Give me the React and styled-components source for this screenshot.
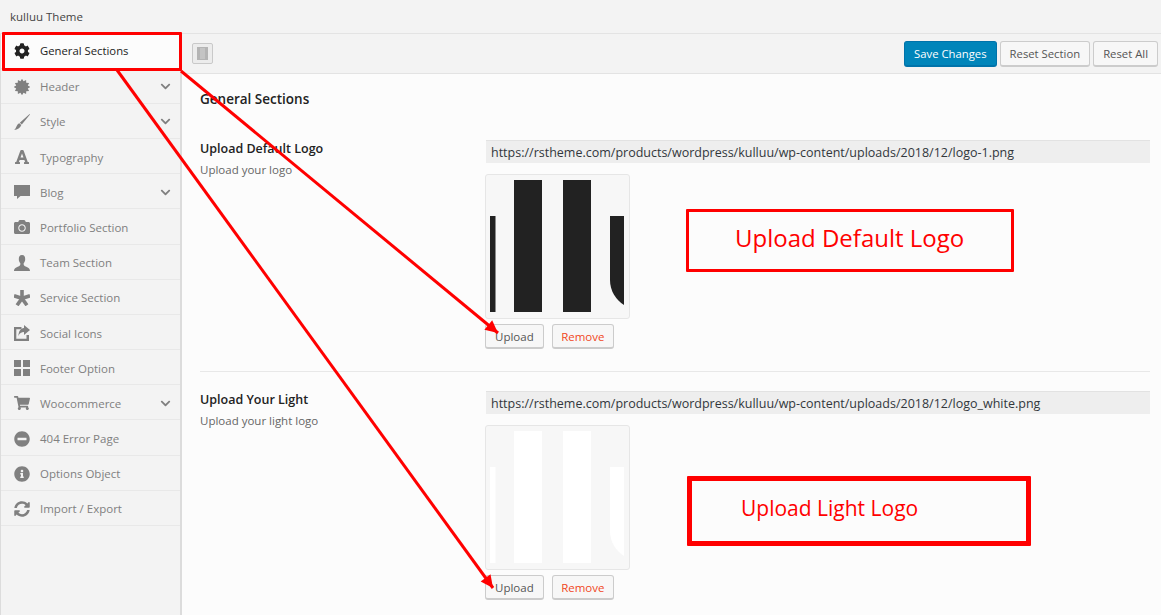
import React from "react";
import styled, { createGlobalStyle } from "styled-components";
import {
  FaCog,
  FaFont,
  FaCamera,
  FaShoppingCart,
  FaMinusCircle,
  FaInfoCircle,
  FaSyncAlt,
  FaChevronDown,
} from "react-icons/fa";

const GlobalStyle = createGlobalStyle`
  html, body {
    margin: 0;
    padding: 0;
    background: #fcfcfc;
  }
  * {
    box-sizing: border-box;
  }
`;

const Page = styled.div`
  position: relative;
  width: 1161px;
  height: 615px;
  overflow: hidden;
  font-family: "Open Sans", "Noto Sans", sans-serif;
  font-size: 12px;
  color: #555;
`;

const TopBar = styled.div`
  height: 34px;
  padding: 0 10px;
  display: flex;
  align-items: center;
  background: #f3f3f3;
  border-bottom: 1px solid #e3e3e3;
  color: #444;
  font-size: 11.5px;
`;

const Body = styled.div`
  display: flex;
  height: 581px;
`;

const Sidebar = styled.nav`
  width: 182px;
  flex: none;
  background: #f3f3f3;
  border-left: 1px solid #dcdcdc;
  border-right: 2px solid #dcdcdc;
`;

const MenuItem = styled.div`
  height: ${({ $active }) => ($active ? "34.6px" : "35.2px")};
  padding: ${({ $active }) => ($active ? "0" : "2px")} 0 0 13px;
  display: flex;
  align-items: center;
  background: ${({ $active }) => ($active ? "#fcfcfc" : "transparent")};
  border-bottom: 1px solid #e8e8e8;
  color: ${({ $active }) => ($active ? "#222" : "#808080")};
  font-size: ${({ $active }) => ($active ? "11.3px" : "11.5px")};
`;

const MenuIcon = styled.span`
  width: 16px;
  height: 16px;
  margin-right: 10px;
  display: flex;
  align-items: center;
  justify-content: center;
  flex: none;
  font-size: 16px;
  color: ${({ $active }) => ($active ? "#222" : "#808080")};
`;

const MenuLabel = styled.span`
  flex: 1;
  white-space: nowrap;
`;

const Chevron = styled(FaChevronDown)`
  margin-right: 9px;
  font-size: 11px;
  color: #808080;
`;

const Main = styled.main`
  flex: 1;
  min-width: 0;
`;

const ActionBar = styled.div`
  height: 40px;
  padding: 7px 3px 0 10px;
  display: flex;
  align-items: flex-start;
  background: #f3f3f3;
  border-bottom: 1px solid #e3e3e3;
`;

const ExpandToggle = styled.div`
  width: 21px;
  height: 21px;
  margin: 2px auto 0 0;
  padding: 3px 4px;
  background: #ececec;
  border: 1px solid #c9c9c9;
  border-radius: 2px;
`;

const ToggleFill = styled.div`
  width: 100%;
  height: 100%;
  background: #c4c4c4;
  border: 1px solid #b4b4b4;
  border-left-width: 3px;
  border-right-width: 3px;
`;

const HeadButton = styled.div`
  height: 26px;
  margin-left: 3px;
  padding: 0 9px;
  display: flex;
  align-items: center;
  background: ${({ $primary }) => ($primary ? "#0085ba" : "#f7f7f7")};
  border: 1px solid ${({ $primary }) => ($primary ? "#0073aa" : "#ccc")};
  border-bottom-width: 2px;
  border-radius: 3px;
  color: ${({ $primary }) => ($primary ? "#fff" : "#555")};
  font-size: 11.3px;
`;

const Content = styled.div`
  padding: 15px 11px 0 18px;
`;

const Title = styled.h2`
  margin: 0 0 31px;
  font-size: 13.5px;
  line-height: 20px;
  font-weight: 600;
  color: #222;
`;

const Row = styled.section`
  display: grid;
  grid-template-columns: 285px 1fr;
  padding-bottom: ${({ $last }) => ($last ? "0" : "22px")};
  margin-bottom: ${({ $last }) => ($last ? "0" : "19px")};
  border-bottom: ${({ $last }) => ($last ? "none" : "1px solid #e8e8e8")};
`;

const FieldName = styled.div`
  font-size: 12.5px;
  line-height: 18px;
  font-weight: 600;
  color: #222;
`;

const FieldHint = styled.div`
  margin-top: 4px;
  font-size: 11.5px;
  line-height: 16px;
  color: #666;
`;

const UrlInput = styled.div`
  width: 664px;
  height: 23px;
  margin: 0 0 11px 1px;
  padding: 0 5px;
  display: flex;
  align-items: center;
  background: #eee;
  border-top: 1px solid #e2e2e2;
  color: #32373c;
  font-size: 12.5px;
  white-space: nowrap;
`;

const Preview = styled.div`
  width: 145px;
  height: 145px;
  background: #f7f7f7;
  border: 1px solid #e6e6e6;
  border-radius: 3px;
`;

const LogoArt = styled.svg`
  display: block;
  margin: -1px;
`;

const Buttons = styled.div`
  margin-top: 5px;
  display: flex;
  gap: 8px;
`;

const SmallButton = styled.div`
  height: 25px;
  padding: 0 ${({ $danger }) => ($danger ? "8.5px" : "9px")};
  display: flex;
  align-items: center;
  background: #f7f7f7;
  border: 1px solid #ccc;
  border-bottom-width: 2px;
  border-radius: 3px;
  color: ${({ $danger }) => ($danger ? "#f1471d" : "#555")};
  font-size: 11.5px;
`;

const Note = styled.div`
  position: absolute;
  left: ${({ $left }) => $left}px;
  top: ${({ $top }) => $top}px;
  width: ${({ $width }) => $width}px;
  height: ${({ $height }) => $height}px;
  padding: 0 0 ${({ $lift }) => $lift}px ${({ $pad }) => $pad}px;
  display: flex;
  align-items: center;
  background: transparent;
  border: ${({ $thick }) => $thick}px solid #f00;
  border-radius: 1px;
  color: #f00;
  font-size: ${({ $size }) => $size}px;
  white-space: nowrap;
`;

const ActiveFrame = styled.div`
  position: absolute;
  left: 2px;
  top: 32px;
  width: 180px;
  height: 39px;
  border: 3px solid #f00;
  border-radius: 1px;
`;

const ArrowLayer = styled.svg`
  position: absolute;
  left: 0;
  top: 0;
  pointer-events: none;
`;

// icons the packages only have in a rounder cut
const Glyph = ({ children }) => (
  <svg width="16" height="16" viewBox="0 0 16 16" fill="currentColor">
    {children}
  </svg>
);

const burstPoints = Array.from({ length: 24 }, (_, i) => {
  const r = i % 2 ? 6 : 8.2;
  const a = (i * Math.PI) / 12;
  return `${8 + r * Math.sin(a)},${8 - r * Math.cos(a)}`;
}).join(" ");

const BurstIcon = () => (
  <Glyph>
    <polygon points={burstPoints} />
  </Glyph>
);

const BrushIcon = () => (
  <Glyph>
    <path d="M15.6 0l.4.4-8.2 10-2-1.7zM5.3 9.2l2 1.8c-1 2.8-3.8 4.6-7.1 5 2.2-1.8 2.2-5.5 5.1-6.8z" />
  </Glyph>
);

const BubbleIcon = () => (
  <Glyph>
    <path d="M0 1h16v11H6.5L3 15v-3H0z" />
  </Glyph>
);

const BustIcon = () => (
  <Glyph>
    <path d="M8 0C5.5 0 4.8 2 4.8 4.2c0 2 1 3.4 1.6 4.2 0 1.5-.4 2.2-2 3C2.5 12.3 0 13 0 16h16c0-3-2.5-3.7-4.4-4.6-1.6-.8-2-1.5-2-3 .6-.8 1.6-2.2 1.6-4.2C11.2 2 10.5 0 8 0z" />
  </Glyph>
);

const StarIcon = () => (
  <Glyph>
    {[0, 72, 144, 216, 288].map((deg) => (
      <rect key={deg} x="6.2" y="0" width="3.6" height="9" transform={`rotate(${deg} 8 8.4)`} />
    ))}
  </Glyph>
);

const ShareIcon = () => (
  <Glyph>
    <path d="M0 2h7.5v2.2H2.3v9.5h10.2V10H15v6H0zM10 0l6 5-6 5V7C7.5 7 5.5 8 4.5 11 4.5 7 6 3.5 10 3z" />
  </Glyph>
);

const GridIcon = () => (
  <Glyph>
    <path d="M0 0h7v7H0zM9 0h7v7H9zM0 9h7v7H0zM9 9h7v7H9z" />
  </Glyph>
);

const menu = [
  { label: "General Sections", icon: FaCog, active: true },
  { label: "Header", icon: BurstIcon, more: true },
  { label: "Style", icon: BrushIcon, more: true },
  { label: "Typography", icon: FaFont },
  { label: "Blog", icon: BubbleIcon, more: true },
  { label: "Portfolio Section", icon: FaCamera },
  { label: "Team Section", icon: BustIcon },
  { label: "Service Section", icon: StarIcon },
  { label: "Social Icons", icon: ShareIcon },
  { label: "Footer Option", icon: GridIcon },
  { label: "Woocommerce", icon: FaShoppingCart, more: true },
  { label: "404 Error Page", icon: FaMinusCircle },
  { label: "Options Object", icon: FaInfoCircle },
  { label: "Import / Export", icon: FaSyncAlt },
];

function Logo({ color }) {
  return (
    <LogoArt width="145" height="145" viewBox="0 0 145 145">
      <g fill={color}>
        <rect x="5" y="42" width="5.5" height="96" />
        <rect x="29" y="6" width="28" height="132" />
        <rect x="78" y="6" width="28" height="132" />
        <path d="M125 42h14v89c-8-5-14-14-14-25z" />
      </g>
    </LogoArt>
  );
}

function LogoField({ name, hint, url, color, last }) {
  return (
    <Row $last={last}>
      <div>
        <FieldName>{name}</FieldName>
        <FieldHint>{hint}</FieldHint>
      </div>
      <div>
        <UrlInput>{url}</UrlInput>
        <Preview>
          <Logo color={color} />
        </Preview>
        <Buttons>
          <SmallButton>Upload</SmallButton>
          <SmallButton $danger>Remove</SmallButton>
        </Buttons>
      </div>
    </Row>
  );
}

function Arrow({ x1, y1, x2, y2 }) {
  // head drawn along the line direction
  const angle = Math.atan2(y2 - y1, x2 - x1);
  const wing = (a, len) => `${x2 - len * Math.cos(a)},${y2 - len * Math.sin(a)}`;
  return (
    <>
      <line x1={x1} y1={y1} x2={x2} y2={y2} stroke="#f00" strokeWidth="3" />
      <polygon
        fill="#f00"
        points={`${x2},${y2} ${wing(angle - 0.45, 14)} ${wing(angle + 0.45, 14)}`}
      />
    </>
  );
}

export default function App() {
  return (
    <Page>
      <GlobalStyle />
      <TopBar>kulluu Theme</TopBar>
      <Body>
        <Sidebar>
          {menu.map(({ label, icon: Icon, active, more }) => (
            <MenuItem key={label} $active={active}>
              <MenuIcon $active={active}>
                <Icon />
              </MenuIcon>
              <MenuLabel>{label}</MenuLabel>
              {more && <Chevron />}
            </MenuItem>
          ))}
        </Sidebar>
        <Main>
          <ActionBar>
            <ExpandToggle>
              <ToggleFill />
            </ExpandToggle>
            <HeadButton $primary>Save Changes</HeadButton>
            <HeadButton>Reset Section</HeadButton>
            <HeadButton>Reset All</HeadButton>
          </ActionBar>
          <Content>
            <Title>General Sections</Title>
            <LogoField
              name="Upload Default Logo"
              hint="Upload your logo"
              url="https://rstheme.com/products/wordpress/kulluu/wp-content/uploads/2018/12/logo-1.png"
              color="#222"
            />
            <LogoField
              last
              name="Upload Your Light"
              hint="Upload your light logo"
              url="https://rstheme.com/products/wordpress/kulluu/wp-content/uploads/2018/12/logo_white.png"
              color="#fff"
            />
          </Content>
        </Main>
      </Body>
      <ActiveFrame />
      <Note $left={686} $top={209} $width={328} $height={63} $thick={3} $pad={46} $lift={6} $size={24}>
        Upload Default Logo
      </Note>
      <Note $left={687} $top={476} $width={344} $height={70} $thick={5} $pad={49} $lift={7} $size={21}>
        Upload Light Logo
      </Note>
      <ArrowLayer width="1161" height="615">
        <Arrow x1={181} y1={71} x2={498} y2={333} />
        <Arrow x1={117} y1={70} x2={493} y2={588} />
      </ArrowLayer>
    </Page>
  );
}
